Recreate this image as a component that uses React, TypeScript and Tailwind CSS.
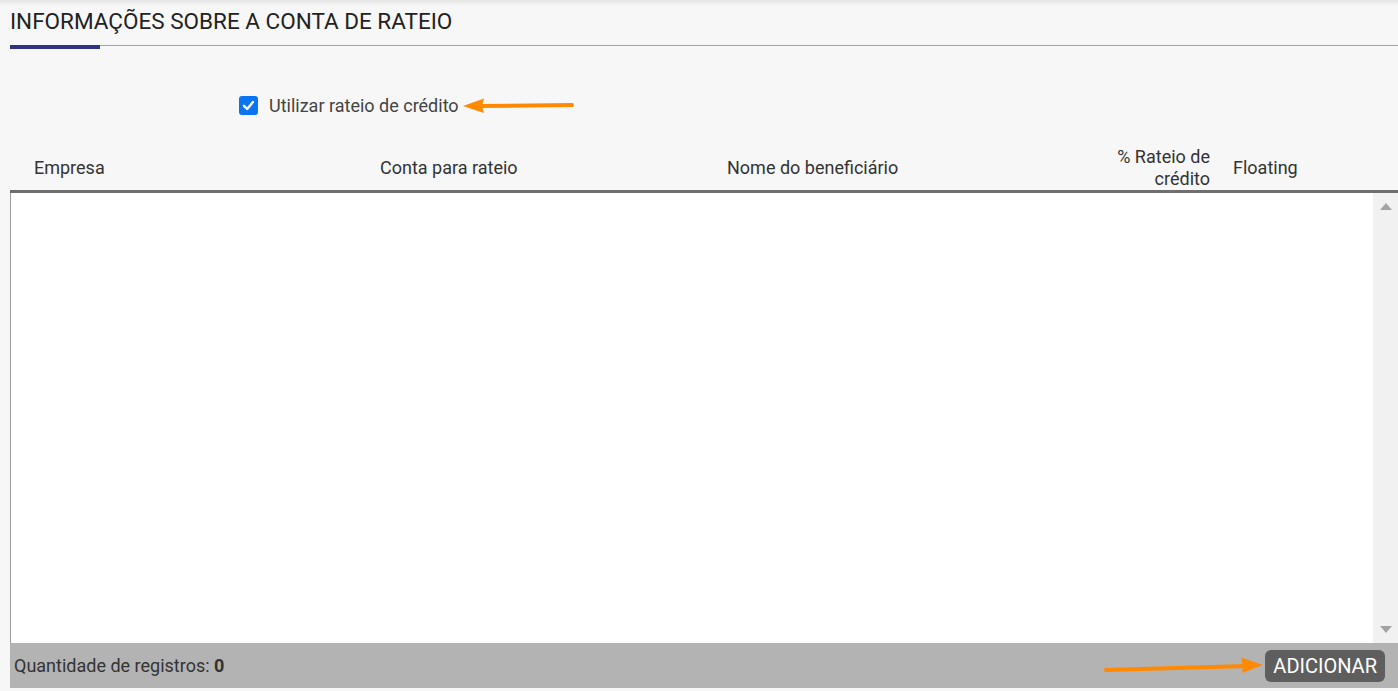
import React from "react";

function ArrowLeft() {
  return (
    <svg className="absolute left-[460px] top-[96px]" width="116" height="20" viewBox="0 0 116 20">
      <path d="M112 9 L20 10" stroke="#ff8a00" strokeWidth="4" strokeLinecap="round" fill="none" />
      <path d="M3 10 L24 2.5 L22 10 L24 17 Z" fill="#ff8a00" />
    </svg>
  );
}

function ArrowRight() {
  return (
    <svg className="absolute left-[1102px] top-[655px]" width="164" height="22" viewBox="0 0 164 22">
      <path d="M4 15 L144 11" stroke="#ff8a00" strokeWidth="4" strokeLinecap="round" fill="none" />
      <path d="M161 10 L139 2.5 L141 11 L140 18 Z" fill="#ff8a00" />
    </svg>
  );
}

export default function App() {
  return (
    <div
      className="relative w-full h-[691px] overflow-hidden bg-[#f7f7f7] text-[#333]"
      style={{ fontFamily: "Roboto, 'Liberation Sans', sans-serif" }}
    >
      <div className="h-[6px] bg-gradient-to-b from-[#e4e4e4] to-[#f7f7f7]" />

      {/* section title */}
      <h1 className="mt-[2px] pl-[10px] text-[22.5px] leading-[26px] text-[#222] uppercase">
        Informações sobre a conta de rateio
      </h1>
      <div className="mt-[11px] ml-[10px] border-t border-[#a3a3a3]">
        <div className="-mt-px h-[4px] w-[90px] bg-[#2e3386]" />
      </div>

      {/* checkbox */}
      <label className="mt-[44px] ml-[239px] flex items-center gap-[11px] h-[24px] w-fit">
        <span className="flex h-[19px] w-[19px] items-center justify-center rounded-[3px] bg-[#0b74f0]">
          <svg width="13" height="13" viewBox="0 0 13 13">
            <path d="M2 6.8 L5.2 10 L11 3" stroke="white" strokeWidth="2.4" fill="none" strokeLinecap="round" strokeLinejoin="round" />
          </svg>
        </span>
        <span className="text-[18px] text-[#444]">Utilizar rateio de crédito</span>
      </label>

      {/* table header */}
      <div className="mt-[29px] ml-[10px] flex h-[44px] items-center border-b-[3px] border-[#6f6f6f] text-[18px] leading-[22px] text-[#333] box-content">
        <div className="w-[346px] pl-[24px]">Empresa</div>
        <div className="w-[347px] pl-[24px]">Conta para rateio</div>
        <div className="w-[397px] pl-[24px]">Nome do beneficiário</div>
        <div className="w-[122px] pr-[12px] text-right">% Rateio de crédito</div>
        <div className="pl-[11px]">Floating</div>
      </div>

      {/* table body */}
      <div className="ml-[10px] flex h-[450px] border-l border-[#9a9a9a] bg-white">
        <div className="flex-1" />
        <div className="flex w-[25px] flex-col items-center justify-between bg-[#f1f1f1] py-[10px]">
          <svg width="12" height="7" viewBox="0 0 12 7">
            <path d="M6 0 L12 7 L0 7 Z" fill="#a3a3a3" />
          </svg>
          <svg width="12" height="7" viewBox="0 0 12 7">
            <path d="M0 0 L12 0 L6 7 Z" fill="#a3a3a3" />
          </svg>
        </div>
      </div>

      {/* footer */}
      <div className="ml-[10px] flex h-[45px] items-center justify-between bg-[#b3b3b3] pl-[4px] pr-[13px]">
        <span className="text-[18px] text-[#333]">
          Quantidade de registros: <b className="font-bold">0</b>
        </span>
        <button className="h-[32px] rounded-[6px] bg-[#5e5e5e] px-[8px] text-[20px] text-white">
          ADICIONAR
        </button>
      </div>

      <ArrowLeft />
      <ArrowRight />
    </div>
  );
}
